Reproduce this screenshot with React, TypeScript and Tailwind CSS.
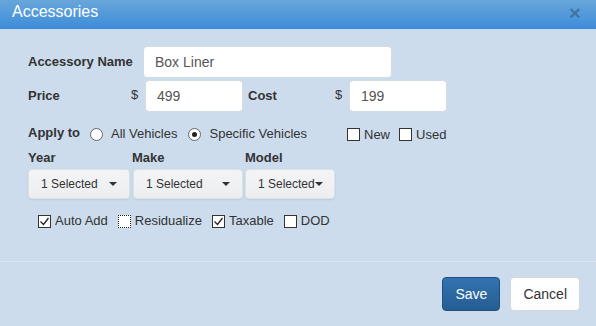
import React from "react";

function Radio({ checked }: { checked?: boolean }) {
  return (
    <span className="w-[13px] h-[13px] rounded-full border border-[#666] bg-white flex items-center justify-center shrink-0">
      {checked && <span className="w-[5px] h-[5px] rounded-full bg-[#222]" />}
    </span>
  );
}

function Check({ checked, dotted }: { checked?: boolean; dotted?: boolean }) {
  return (
    <span
      className={
        "w-[13px] h-[13px] bg-white flex items-center justify-center shrink-0 border " +
        (dotted ? "border-dotted border-[#222]" : "border-solid border-[#333]")
      }
    >
      {checked && (
        <svg width="11" height="11" viewBox="0 0 11 11">
          <polyline points="1.5,5.5 4.5,8.5 9.5,2" fill="none" stroke="#222" strokeWidth="1.3" />
        </svg>
      )}
    </span>
  );
}

function Dropdown({ w }: { w: string }) {
  return (
    <div
      className={
        w +
        " h-[30px] rounded-[4px] bg-linear-to-b from-[#f3f4f5] to-[#eceef0] border border-[#dce1e6] shadow-[0_1px_2px_rgba(0,0,0,0.08)] flex items-center justify-between px-[12px] text-[12px] text-[#333]"
      }
    >
      <span>1 Selected</span>
      <span className="w-0 h-0 border-x-[4px] border-x-transparent border-t-[4px] border-t-[#333]" />
    </div>
  );
}

export default function App() {
  return (
    <div className="w-[596px] h-[326px] bg-[#ccdcec] font-['Liberation_Sans',Arial,sans-serif] text-[#333] overflow-hidden">
      <div className="h-[29px] bg-linear-to-b from-[#68a6d9] to-[#3b8cdb] flex items-start justify-between pl-[12px] pr-[15px] pt-[4px]">
        <span className="text-white text-[16px] leading-[16px]">Accessories</span>
        <span className="text-[21px] font-bold text-black/25 leading-[18px]">×</span>
      </div>

      <div className="pl-[28px] pt-[17px] pb-[30px]">
        <div className="flex items-center h-[32px]">
          <span className="w-[115px] font-bold text-[13px]">Accessory Name</span>
          <div className="w-[249px] h-[32px] bg-white rounded-[4px] border border-[#d3dbe4] px-[11px] flex items-center text-[14px] text-[#555]">
            Box Liner
          </div>
        </div>

        <div className="flex items-center h-[32px] mt-[2px]">
          <span className="w-[103px] font-bold text-[13px]">Price</span>
          <span className="w-[14px] text-[13px] -mt-[3px]">$</span>
          <div className="w-[98px] h-[32px] bg-white rounded-[4px] border border-[#d3dbe4] px-[11px] flex items-center text-[14px] text-[#555]">
            499
          </div>
          <span className="ml-[5px] w-[87px] font-bold text-[13px]">Cost</span>
          <span className="w-[14px] text-[13px] -mt-[3px]">$</span>
          <div className="w-[98px] h-[32px] bg-white rounded-[4px] border border-[#d3dbe4] px-[11px] flex items-center text-[14px] text-[#555]">
            199
          </div>
        </div>

        <div className="flex items-center h-[20px] mt-[12px] text-[13px]">
          <div className="w-[319px] flex items-center">
            <span className="w-[62px] font-bold -mt-[3px]">Apply to</span>
            <Radio />
            <span className="ml-[8px]">All Vehicles</span>
            <span className="ml-[11px]">
              <Radio checked />
            </span>
            <span className="ml-[8px]">Specific Vehicles</span>
          </div>
          <Check />
          <span className="ml-[4px] mt-[2px]">New</span>
          <span className="ml-[9px]">
            <Check />
          </span>
          <span className="ml-[4px] mt-[2px]">Used</span>
        </div>

        <div className="flex mt-[6px]">
          <div className="w-[104px]">
            <div className="h-[15px] leading-[15px] font-bold text-[13px]">Year</div>
            <div className="mt-[4px]">
              <Dropdown w="w-[102px]" />
            </div>
          </div>
          <div className="w-[113px]">
            <div className="h-[15px] leading-[15px] font-bold text-[13px]">Make</div>
            <div className="mt-[4px] ml-[1px]">
              <Dropdown w="w-[110px]" />
            </div>
          </div>
          <div>
            <div className="h-[15px] leading-[15px] font-bold text-[13px]">Model</div>
            <div className="mt-[4px]">
              <div className="w-[90px] h-[30px] rounded-[4px] bg-linear-to-b from-[#f3f4f5] to-[#eceef0] border border-[#dce1e6] shadow-[0_1px_2px_rgba(0,0,0,0.08)] flex items-center pl-[12px] text-[12px] text-[#333]">
                <span>1 Selected</span>
                <span className="w-0 h-0 border-x-[4px] border-x-transparent border-t-[4px] border-t-[#333]" />
              </div>
            </div>
          </div>
        </div>

        <div className="flex items-center h-[20px] mt-[12px] pl-[10px] text-[13px]">
          <Check checked />
          <span className="ml-[4px]">Auto Add</span>
          <span className="ml-[10px]">
            <Check dotted />
          </span>
          <span className="ml-[4px]">Residualize</span>
          <span className="ml-[10px]">
            <Check checked />
          </span>
          <span className="ml-[4px]">Taxable</span>
          <span className="ml-[10px]">
            <Check />
          </span>
          <span className="ml-[4px]">DOD</span>
        </div>
      </div>

      <div className="border-t border-[#dfe4ea] flex justify-end gap-[10px] pt-[15px] pr-[16px]">
        <button className="h-[34px] px-[12px] rounded-[4px] bg-linear-to-b from-[#3273b0] to-[#255d92] border border-[#22507c] text-white text-[14px]">
          Save
        </button>
        <button className="h-[34px] px-[12px] rounded-[4px] bg-white border border-[#d4d8dc] text-[#333] text-[14px]">
          Cancel
        </button>
      </div>
    </div>
  );
}
